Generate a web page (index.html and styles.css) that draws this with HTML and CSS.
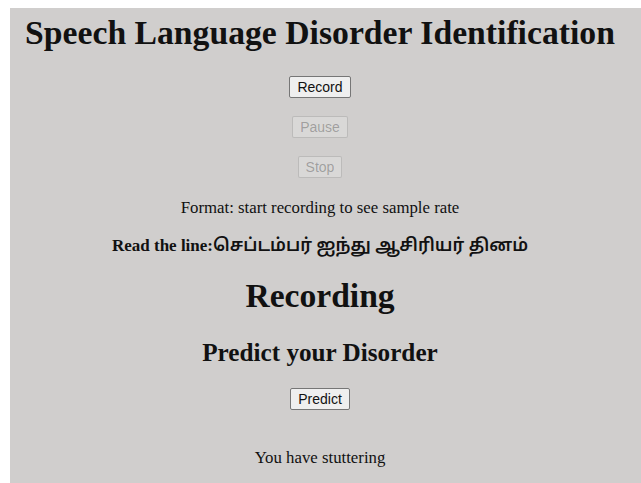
FILE: index.html
```html
<!DOCTYPE html>
<html>
<head>
<meta charset="utf-8">
<title>Speech Language Disorder Identification</title>
<link rel="stylesheet" href="styles.css">
</head>
<body>
<div class="page">
  <h1 class="title">Speech Language Disorder Identification</h1>
  <div class="controls">
    <button class="btn">Record</button>
    <button class="btn" disabled>Pause</button>
    <button class="btn" disabled>Stop</button>
  </div>
  <p class="format">Format: start recording to see sample rate</p>
  <p class="line"><b>Read the line:</b><span class="tamil">செப்டம்பர் ஐந்து ஆசிரியர் தினம்</span></p>
  <h1 class="status">Recording</h1>
  <h2 class="predict-title">Predict your Disorder</h2>
  <button class="btn">Predict</button>
  <p class="result">You have stuttering</p>
</div>
</body>
</html>
```

FILE: styles.css
```css
html, body {
  margin: 0;
  padding: 0;
  background: #ffffff;
}

body {
  padding: 8px 0 0 10px;
  font-family: "Liberation Serif", "Times New Roman", serif;
  color: #111;
}

.page {
  background: #d0cecd;
  min-height: 475px;
  padding-right: 11px;
  display: flex;
  flex-direction: column;
  align-items: center;
  text-align: center;
}

.title {
  font-size: 33.7px;
  font-weight: bold;
  margin: 5px 0 0;
  line-height: 39px;
}

.controls {
  display: flex;
  flex-direction: column;
  align-items: center;
  gap: 18px;
  margin-top: 24px;
}

.btn {
  font-family: "Liberation Sans", Arial, sans-serif;
  font-size: 14px;
  color: #111;
  background: #efefef;
  border: 1px solid #767676;
  border-radius: 2px;
  padding: 1px 7px;
  height: 22px;
}

.btn:disabled {
  color: rgba(16, 16, 16, 0.3);
  background: rgba(239, 239, 239, 0.3);
  border-color: rgba(118, 118, 118, 0.3);
}

.format {
  font-size: 16.8px;
  margin: 20px 0 0;
}

.line {
  font-size: 17px;
  margin: 18px 0 0;
}

.tamil {
  font-family: "Noto Sans Tamil", "Lohit Tamil", "Latha", sans-serif;
  font-size: 17.5px;
  font-weight: 600;
}

.status {
  font-size: 33.6px;
  margin: 20px 0 0;
}

.predict-title {
  font-size: 25.2px;
  margin: 24px 0 0;
}

.result {
  font-size: 16.8px;
  margin: 38px 0 0;
}

.page > .btn {
  margin-top: 21px;
}
```
